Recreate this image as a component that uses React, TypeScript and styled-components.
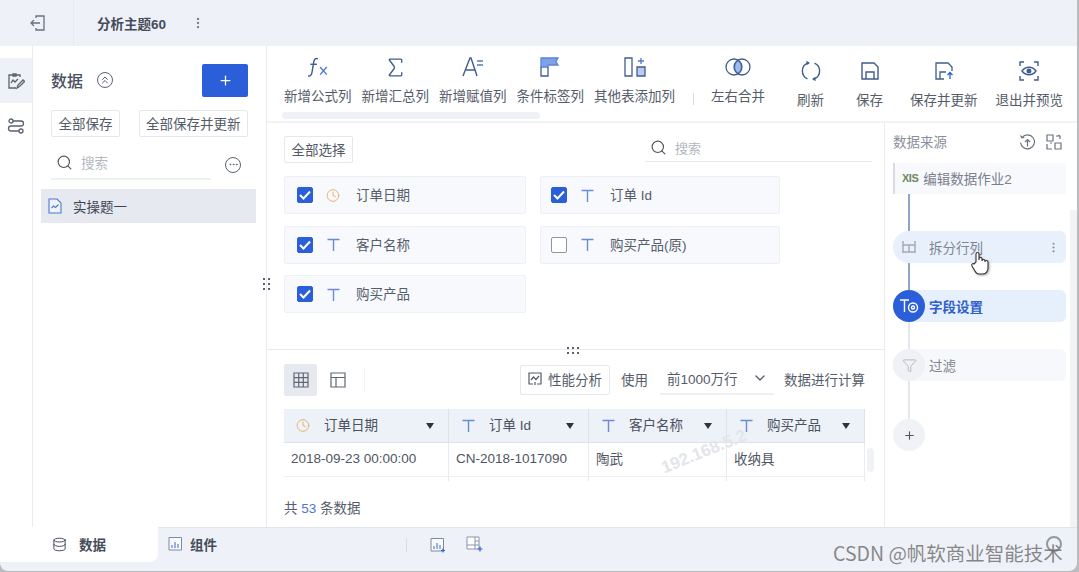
import React from "react";
import styled, {createGlobalStyle} from "styled-components";
import {ChevronDown, ChevronsUp, Clock, Database, EllipsisVertical, Ellipsis, Filter, Plus, Search, Sigma} from "lucide-react";

const GlobalStyle = createGlobalStyle`
    html, body {
        margin: 0;
        padding: 0;
        background: #b9bbbd;
    }
    body {
        font-family: "Liberation Sans", "Noto Sans CJK SC", sans-serif;
        color: #4c5361;
        overflow: hidden;
    }
    * {
        box-sizing: border-box;
    }
`

const Window = styled.div`
    position: relative;
    width: 1077px;
    height: 571px;
    display: flex;
    flex-direction: column;
    background: #eef1f7;
    border-radius: 0 0 8px 8px;
    overflow: hidden;
`

/* top bar */
const TopBar = styled.div`
    height: 46px;
    flex: none;
    display: flex;
    align-items: center;
`
const BackCell = styled.div`
    width: 74px;
    height: 46px;
    display: flex;
    align-items: center;
    padding-left: 29px;
    border-right: 1px solid #e6e9f0;
    color: #6a7180;
`
const TopTitle = styled.div`
    margin-left: 23px;
    padding-bottom: 1px;
    font-size: 13.5px;
    font-weight: 700;
    color: #454c59;
    width: 94px;
`
const MoreDots = styled.div`
    display: flex;
    color: #767d8a;
`

/* main area */
const Main = styled.div`
    flex: 1;
    min-height: 0;
    display: flex;
    background: #fff;
`
const Rail = styled.div`
    width: 33px;
    flex: none;
    padding-top: 12px;
    border-right: 1px solid #e9ebf0;
`
const RailItem = styled.div<{ $active?: boolean }>`
    height: 45px;
    display: flex;
    align-items: center;
    justify-content: center;
    background: ${props => props.$active ? "#eef1f7" : "transparent"};
    color: #5a6270;
`
const DataPanel = styled.div`
    width: 234px;
    flex: none;
    position: relative;
    border-right: 1px solid #e9ebf0;
    padding-top: 18px;
`
const DataHead = styled.div`
    display: flex;
    align-items: center;
    padding: 0 18px;
    height: 32px;
`
const DataTitle = styled.div`
    font-size: 16px;
    font-weight: 500;
    color: #4a5160;
    margin-right: 14px;
`
const RoundIcon = styled.div`
    width: 16px;
    height: 16px;
    border-radius: 50%;
    border: 1.2px solid #5d6472;
    display: flex;
    align-items: center;
    justify-content: center;
    color: #5d6472;
`
const AddButton = styled.div`
    margin-left: auto;
    width: 46px;
    height: 33px;
    border-radius: 2px;
    background: #2b5fd9;
    color: #fff;
    display: flex;
    align-items: center;
    justify-content: center;
`
const SaveRow = styled.div`
    display: flex;
    justify-content: space-between;
    padding: 0 18px;
    margin-top: 14px;
`
const PlainButton = styled.div`
    height: 27px;
    padding: 0 6.5px 2px;
    display: inline-flex;
    align-items: center;
    border: 1px solid #e4e7ed;
    border-radius: 2px;
    font-size: 13.5px;
    color: #535a68;
    background: #fff;
    white-space: nowrap;
`
const SearchRow = styled.div`
    display: flex;
    align-items: center;
    margin: 12px 0 0 18px;
    width: 190px;
`
const SearchField = styled.div`
    width: 160px;
    height: 31px;
    display: flex;
    align-items: center;
    gap: 8px;
    padding: 0 0 3px 5px;
    border-bottom: 2px solid #eef0f4;
    font-size: 13.5px;
    color: #b4b8c0;
    svg {
        color: #4c5361;
    }
`
const MoreCircle = styled(RoundIcon)`
    margin-left: auto;
`
const TreeRow = styled.div`
    margin: 9px 10px 0 8px;
    height: 34px;
    background: #e6e9f0;
    display: flex;
    align-items: center;
    padding-left: 7px;
    gap: 11px;
    font-size: 13.5px;
    color: #3e4552;
`
const Grip = styled.div`
    position: absolute;
    right: -5px;
    top: 232px;
    width: 8px;
    display: grid;
    grid-template-columns: 3px 3px;
    gap: 3px 2px;
    i {
        width: 2px;
        height: 2px;
        background: #5a6270;
    }
`

/* centre column */
const Workspace = styled.div`
    flex: 1;
    min-width: 0;
    display: flex;
    flex-direction: column;
`
const Toolbar = styled.div`
    height: 77px;
    flex: none;
    display: flex;
    border-bottom: 2px solid #f0f2f6;
`
const ToolScroll = styled.div`
    width: 426px;
    flex: none;
    padding-left: 17px;
`
const ToolRow = styled.div`
    display: flex;
    gap: 10px;
    white-space: nowrap;
`
const ScrollThumb = styled.div`
    width: 258px;
    height: 7px;
    margin: 6px 0 0 -2px;
    border-radius: 4px;
    background: #eef1f6;
`
const Tool = styled.div<{ $low?: boolean; $gap?: number }>`
    display: flex;
    flex-direction: column;
    align-items: center;
    flex: none;
    padding-top: ${props => props.$low ? 12 : 8}px;
    margin-left: ${props => props.$gap ?? 0}px;
    font-size: 13.5px;
    line-height: 18px;
    color: #555c6a;
`
const ToolIcon = styled.div`
    height: 26px;
    margin-bottom: 8px;
    display: flex;
    align-items: center;
    justify-content: center;
    color: #3f5d8f;
`
const ToolDivider = styled.div`
    width: 1px;
    height: 12px;
    margin-top: 47px;
    background: #d9dce3;
`
const Body = styled.div`
    flex: 1;
    min-height: 0;
    display: flex;
`
const Center = styled.div`
    width: 618px;
    flex: none;
    display: flex;
    flex-direction: column;
    border-right: 1px solid #e9ebf0;
`
const FieldSection = styled.div`
    height: 227px;
    flex: none;
    position: relative;
    padding: 13px 17px 0;
    border-bottom: 1px solid #e9ebf0;
`
const FieldHead = styled.div`
    display: flex;
    justify-content: space-between;
    align-items: flex-start;
`
const FieldSearch = styled.div`
    width: 227px;
    height: 26px;
    margin-right: -5px;
    display: flex;
    align-items: center;
    gap: 8px;
    padding: 0 0 2px 5px;
    border-bottom: 1px solid #e8eaef;
    font-size: 13px;
    color: #b4b8c0;
    svg {
        color: #4c5361;
    }
`
const FieldGrid = styled.div`
    display: grid;
    grid-template-columns: 242px 240px;
    column-gap: 14px;
    row-gap: 11.5px;
    margin-top: 13px;
`
const FieldCard = styled.div`
    height: 38px;
    display: flex;
    align-items: center;
    padding-left: 12px;
    background: #f7f9fd;
    border: 1px solid #eef0f5;
    border-radius: 2px;
    font-size: 13.5px;
    color: #555c6a;
    &:nth-child(even) {
        padding-left: 10px;
    }
`
const FieldName = styled.span`
    padding-bottom: 2px;
`
const Check = styled.div<{ $on?: boolean }>`
    width: 16px;
    height: 16px;
    flex: none;
    border-radius: 2px;
    display: flex;
    align-items: center;
    justify-content: center;
    background: ${props => props.$on ? "#2b5fd9" : "#fff"};
    border: 1px solid ${props => props.$on ? "#2b5fd9" : "#8f949e"};
`
const TypeSlot = styled.div`
    width: 14px;
    margin: 0 16px 0 13px;
    display: flex;
    justify-content: center;
    flex: none;
`
const SplitDots = styled.div`
    position: absolute;
    left: 300px;
    bottom: -5px;
    display: grid;
    grid-template-columns: repeat(3, 2px);
    gap: 3px 3px;
    i {
        width: 2px;
        height: 2px;
        background: #5a6270;
    }
`
const PreviewSection = styled.div`
    flex: 1;
    min-height: 0;
    padding: 14px 17px 0;
    position: relative;
`
const PreviewBar = styled.div`
    display: flex;
    align-items: center;
    height: 32px;
    font-size: 13.5px;
    color: #555c6a;
`
const ViewToggle = styled.div<{ $active?: boolean }>`
    width: 33px;
    height: 32px;
    margin-right: 4px;
    border-radius: 2px;
    display: flex;
    align-items: center;
    justify-content: center;
    background: ${props => props.$active ? "#e6e9f0" : "transparent"};
    color: #5f6775;
`
const BarDivider = styled.div`
    width: 1px;
    height: 24px;
    margin-left: 6px;
    background: #f1f2f5;
`
const AnalyzeButton = styled(PlainButton)`
    margin-left: auto;
    height: 30px;
    padding: 0 7px 2px 7px;
    gap: 6px;
`
const UseLabel = styled.div`
    margin: 0 12px 2px 11px;
`
const RangeSelect = styled.div`
    width: 114px;
    height: 30px;
    display: flex;
    align-items: center;
    justify-content: space-between;
    padding: 0 6px 2px 7px;
    border-bottom: 2px solid #eef0f4;
`
const CalcLabel = styled.div`
    margin: 0 2px 2px 10px;
`
const TableClip = styled.div`
    margin-top: 13px;
    width: 581px;
    height: 72px;
    overflow: hidden;
`
const DataGrid = styled.div`
    display: grid;
    grid-template-columns: 165px 140px 138px 138px;
    grid-auto-rows: 34px;
    font-size: 13.5px;
    color: #4f5663;
`
const HeadCell = styled.div`
    display: flex;
    align-items: center;
    padding: 0 14px 0 12px;
    background: #edf1f8;
    border-right: 1px solid #dde1e9;
    border-bottom: 1px solid #dde1e9;
`
const HeadSlot = styled.div`
    width: 14px;
    flex: none;
    display: flex;
    justify-content: center;
`
const HeadText = styled.span`
    margin-left: 14px;
    padding-bottom: 3px;
    color: #4a5160;
`
const SortArrow = styled.span`
    margin-left: auto;
    width: 0;
    height: 0;
    border-left: 4px solid transparent;
    border-right: 4px solid transparent;
    border-top: 6px solid #2d3340;
`
const DataCell = styled.div`
    display: flex;
    align-items: center;
    padding: 0 0 3px 7px;
    border-right: 1px solid #e8ebf1;
    border-bottom: 1px solid #eef0f5;
    white-space: nowrap;
`
const GridWatermark = styled.div`
    position: absolute;
    left: 392px;
    top: 92px;
    font-size: 17px;
    font-weight: 700;
    color: #e3e5e9;
    transform: rotate(-22deg);
    pointer-events: none;
`
const GridScroll = styled.div`
    position: absolute;
    left: 600px;
    top: 98px;
    width: 7px;
    height: 24px;
    border-radius: 4px;
    background: #f0f2f5;
`
const TotalLine = styled.div`
    margin-top: 16px;
    font-size: 13.5px;
    color: #555c6a;
    em {
        font-style: normal;
        color: #4a76d6;
    }
`

/* right column */
const FlowPanel = styled.div`
    flex: 1;
    min-width: 0;
    position: relative;
    padding: 6px 11px 0 8px;
`
const FlowHead = styled.div`
    display: flex;
    align-items: center;
    height: 24px;
    font-size: 13.5px;
    color: #8a909b;
    svg {
        color: #6a7180;
    }
`
const FlowHeadIcons = styled.div`
    margin-left: auto;
    margin-right: 4px;
    margin-top: 2px;
    display: flex;
    gap: 10px;
`
const SourceCard = styled.div`
    margin-top: 10px;
    height: 31px;
    display: flex;
    align-items: center;
    gap: 5px;
    padding: 0 0 2px 7px;
    background: #f7f9fd;
    border-left: 2px solid #d9dce2;
    font-size: 13.5px;
    color: #7a808c;
`
const XlsMark = styled.span`
    font-size: 11px;
    font-weight: 700;
    letter-spacing: -0.5px;
    color: #6b8c5a;
`
const Connector = styled.div<{ $h: number; $dark?: boolean }>`
    width: 2px;
    height: ${props => props.$h}px;
    margin-left: 15px;
    background: ${props => props.$dark ? "#8fa7c4" : "#e4e7ec"};
`
const FlowNode = styled.div<{ $bg: string; $bold?: boolean }>`
    height: 32px;
    display: flex;
    align-items: center;
    border-radius: 16px 6px 6px 16px;
    background: ${props => props.$bg};
    font-size: 13.5px;
    font-weight: ${props => props.$bold ? 700 : 400};
    color: ${props => props.$bold ? "#2f5fc9" : "#80868f"};
    span {
        margin-left: 4px;
        padding-bottom: 1px;
    }
`
const NodeIcon = styled.div<{ $bg?: string; $color?: string }>`
    width: 32px;
    height: 32px;
    border-radius: 50%;
    flex: none;
    display: flex;
    align-items: center;
    justify-content: center;
    background: ${props => props.$bg ?? "transparent"};
    color: ${props => props.$color ?? "#a3a9b3"};
`
const NodeMore = styled.div`
    margin-left: auto;
    margin-right: 6px;
    display: flex;
    color: #8a909b;
`
const AddNode = styled(NodeIcon)`
    background: #f0f2f5;
    color: #4c5361;
`
const HandCursor = styled.div`
    position: absolute;
    left: 85px;
    top: 128px;
    filter: drop-shadow(1px 1px 1px rgba(0, 0, 0, .35));
`
const FlowScroll = styled.div`
    position: absolute;
    right: 0;
    top: 87px;
    bottom: 0;
    width: 7px;
    background: #f2f3f5;
`

/* bottom tabs */
const BottomBar = styled.div`
    height: 44px;
    flex: none;
    display: flex;
    border-top: 1px solid #e1e4ea;
    font-size: 13.5px;
    font-weight: 700;
    color: #454c59;
`
const ActiveTab = styled.div`
    width: 158px;
    height: 35px;
    margin-top: -1px;
    padding: 0 0 1px 52px;
    display: flex;
    align-items: center;
    gap: 12px;
    background: #fff;
    border-radius: 0 0 8px 0;
`
const OtherTab = styled.div`
    display: flex;
    align-items: center;
    height: 31px;
    gap: 6px;
    margin-left: 10px;
`
const BarSep = styled.div`
    width: 1px;
    height: 14px;
    margin: 10px 23px 0 189px;
    background: #d9dce3;
`
const AddChart = styled.div`
    height: 33px;
    margin-right: 20px;
    display: flex;
    align-items: center;
`
const CornerCircle = styled.div`
    position: absolute;
    left: 1046px;
    top: 536px;
    width: 16px;
    height: 16px;
    border: 2px solid #8f98a6;
    border-radius: 50%;
`
const CsdnMark = styled.div`
    position: absolute;
    left: 833px;
    top: 539px;
    font-family: "Noto Sans CJK SC", sans-serif;
    font-size: 19.5px;
    line-height: 28px;
    white-space: nowrap;
    color: rgba(105, 105, 105, .78);
    pointer-events: none;
`

const Ink = "#3f5d8f"

const BackIcon = () => (
    <svg width="18" height="18" viewBox="0 0 18 18" fill="none" stroke="currentColor" strokeWidth="1.3">
        <path d="M7 4V2h8v14H7v-2"/>
        <path d="M11 9H2M5 6 2 9l3 3"/>
    </svg>
)
const ReportIcon = () => (
    <svg width="18" height="18" viewBox="0 0 18 18" fill="none" stroke="currentColor" strokeWidth="1.3">
        <path d="M13 5V3H2v13h7"/>
        <path d="M6 2h3v2H6zM4 11l2-3 2 2 3-3"/>
        <path d="m10 16 1-3 5-5 1.500 1.500-5 5z"/>
    </svg>
)
const FlowIcon = () => (
    <svg width="18" height="18" viewBox="0 0 18 18" fill="none" stroke="currentColor" strokeWidth="1.3">
        <circle cx="4" cy="4" r="2"/>
        <circle cx="14" cy="14" r="2"/>
        <path d="M6 4h8a2.500 2.500 0 0 1 0 5H4a2.500 2.500 0 0 0 0 5h8"/>
    </svg>
)
const ChartDocIcon = () => (
    <svg width="14" height="16" viewBox="0 0 14 16" fill="#eef3fc" stroke="#4f78cf" strokeWidth="1.100">
        <path d="M1 1h8l4 4v10H1z"/>
        <path d="m3.500 10 2-2 2 1.500 3-3" fill="none"/>
    </svg>
)
const FxIcon = () => (
    <svg width="24" height="24" viewBox="0 0 22 22" fill="none" stroke={Ink} strokeWidth="1.300">
        <path d="M11 3.500C8.500 2.500 7.500 4 7 7L5.500 16C5 19 3.500 19.500 2 19"/>
        <path d="M4 8.500h6"/>
        <path d="m13 11 6 7M19 11l-6 7" stroke="#4f78cf"/>
    </svg>
)
const AssignIcon = () => (
    <svg width="22" height="22" viewBox="0 0 22 22" fill="none" stroke={Ink} strokeWidth="1.400">
        <path d="M1 20 8 2h1l6 18M4 14h9"/>
        <path d="M15 5h6M15 9h6" stroke="#4f78cf"/>
    </svg>
)
const FlagIcon = () => (
    <svg width="20" height="20" viewBox="0 0 20 20" stroke={Ink} strokeWidth="1.300">
        <path d="M1 1h17l-2 3.500L18 8H8v2H1z" fill="#7ea2e6" stroke="#5b83d8"/>
        <path d="M1 10v9h7v-9" fill="none"/>
    </svg>
)
const TableAddIcon = () => (
    <svg width="22" height="20" viewBox="0 0 22 20" fill="none" stroke={Ink} strokeWidth="1.300">
        <path d="M1 1h7v18H1z"/>
        <path d="M13 10h8v9h-8z" fill="#b9cdf2"/>
        <path d="M17 1v6M14 4h6" stroke="#4f78cf"/>
    </svg>
)
const MergeIcon = () => (
    <svg width="26" height="20" viewBox="0 0 26 20" fill="none" stroke={Ink} strokeWidth="1.300">
        <path d="M13 3.500a8 8 0 0 1 0 13 8 8 0 0 1 0-13z" fill="#9dbcf0" stroke="#5b83d8"/>
        <circle cx="9" cy="10" r="8"/>
        <circle cx="17" cy="10" r="8"/>
    </svg>
)
const RefreshIcon = () => (
    <svg width="22" height="22" viewBox="0 0 22 22" fill="none" stroke={Ink} strokeWidth="1.400">
        <path d="M7.500 3.200A8.500 8.500 0 0 0 7.500 18.800"/>
        <path d="M14.500 3.200A8.500 8.500 0 0 1 14.500 18.800"/>
        <path d="M10 3 6.500.8v4.400zM12 19l3.500-2.200v4.400z" fill={Ink} stroke="none"/>
    </svg>
)
const SaveIcon = () => (
    <svg width="20" height="20" viewBox="0 0 20 20" fill="none" stroke={Ink} strokeWidth="1.400">
        <path d="M2 2h12l4 4v12H2z"/>
        <path d="M6 18v-7h8v7"/>
    </svg>
)
const SaveUpIcon = () => (
    <svg width="20" height="20" viewBox="0 0 20 20" fill="none" stroke={Ink} strokeWidth="1.300">
        <path d="M10 18H2V2h12l4 4v4"/>
        <path d="M6 18v-7h6"/>
        <path d="M16 18v-6M13.500 14l2.500-2.500 2.500 2.500" stroke="#2b5fd9"/>
    </svg>
)
const ExitViewIcon = () => (
    <svg width="20" height="20" viewBox="0 0 20 20" fill="none" stroke={Ink} strokeWidth="1.400">
        <path d="M1 5V1h4M15 1h4v4M19 15v4h-4M5 19H1v-4"/>
        <path d="M3 10c3.500-5 10.500-5 14 0-3.500 5-10.500 5-14 0z"/>
        <circle cx="10" cy="10" r="1.800" fill={Ink}/>
    </svg>
)
const Tick = () => (
    <svg width="12" height="10" viewBox="0 0 12 10" fill="none" stroke="#fff" strokeWidth="2">
        <path d="m1 5 3.500 3.500L11 1.500"/>
    </svg>
)
const TypeIcon = () => (
    <svg width="13" height="13" viewBox="0 0 13 13" fill="none" stroke="#6b8ad6" strokeWidth="1.400">
        <path d="M.5 1.500h12M6.500 1.500V13"/>
    </svg>
)
const GridIcon = () => (
    <svg width="16" height="16" viewBox="0 0 16 16" fill="none" stroke="currentColor" strokeWidth="1.200">
        <path d="M1 1h14v14H1zM1 5.700h14M1 10.300h14M5.700 1v14M10.300 1v14"/>
    </svg>
)
const PivotIcon = () => (
    <svg width="16" height="16" viewBox="0 0 16 16" fill="none" stroke="currentColor" strokeWidth="1.200">
        <path d="M1 1h14v14H1zM1 5.500h14M6 5.500V15"/>
    </svg>
)
const AnalyzeIcon = () => (
    <svg width="14" height="14" viewBox="0 0 14 14" fill="none" stroke="currentColor" strokeWidth="1.200">
        <path d="M5 12H1V1h12v11H9"/>
        <path d="m3 8 2.500-3L8 7.500 11 4M7 10v3"/>
    </svg>
)
const HistoryIcon = () => (
    <svg width="17" height="17" viewBox="0 0 17 17" fill="none" stroke="currentColor" strokeWidth="1.200">
        <path d="M3 3.500A7 7 0 1 1 1.500 8.500"/>
        <path d="M1.500 1.500 3 3.700l2.300-.6M8.500 12.500v-7M6 8l2.500-2.500L11 8"/>
    </svg>
)
const SwapIcon = () => (
    <svg width="16" height="16" viewBox="0 0 16 16" fill="none" stroke="currentColor" strokeWidth="1.200">
        <path d="M1 1h6v6H1zM9 9h6v6H9zM10 2h4v3M1 10v5h5M12.500 1 14 2.500M4 9h2"/>
    </svg>
)
const SplitIcon = () => (
    <svg width="14" height="14" viewBox="0 0 14 14" fill="none" stroke="currentColor" strokeWidth="1.400">
        <path d="M1 1v12M13 1v12M1 5h12M1 12h12M7 5v7"/>
    </svg>
)
const FieldSetIcon = () => (
    <svg width="20" height="16" viewBox="0 0 20 16" fill="none" stroke="#fff" strokeWidth="1.400">
        <path d="M1 2h9M5.500 2v12"/>
        <circle cx="14" cy="9.500" r="4.500"/>
        <circle cx="14" cy="9.500" r="1.500"/>
    </svg>
)
const HandIcon = () => (
    <svg width="20" height="24" viewBox="0 0 20 24" fill="#fff" stroke="#333" strokeWidth="1.100">
        <path d="M6 11V3a1.500 1.500 0 0 1 3 0v6-1a1.500 1.500 0 0 1 3 0v2a1.500 1.500 0 0 1 3 0v1a1.500 1.500 0 0 1 3 0v6c0 3-2 6-5 6H9c-2 0-3-1-4-3l-3-5c-1-2 1-3 2-2z"/>
    </svg>
)
const MiniChartIcon = ({add}: { add?: boolean }) => (
    <svg width="16" height="16" viewBox="0 0 16 16" fill="#fff" stroke="#7f8aa0" strokeWidth="1">
        <path d="M1 1.500h12.500v12.500H1z" fill="#f7f9fd"/>
        <path d="M4 12V9M7 12V6M10 12V8" stroke="#5b83d8" strokeWidth="1.200"/>
        {add && <path d="M13 11.500v4M11 13.500h4" stroke="#2b5fd9" strokeWidth="1.200"/>}
    </svg>
)
const MiniTableIcon = () => (
    <svg width="18" height="17" viewBox="0 0 18 17" fill="#fff" stroke="#8b95aa" strokeWidth="1">
        <path d="M1 1h12v12H1z"/>
        <path d="M9 1v12M9 5h4M9 9h4M1 9h8" fill="none"/>
        <path d="M14 10.500v5M11.500 13h5" stroke="#2b5fd9" strokeWidth="1.200"/>
    </svg>
)

const OrderClock = () => <Clock size={15} color="#e8ae62" strokeWidth={1.6}/>

const leftTools = [
    {label: "新增公式列", icon: <FxIcon/>},
    {label: "新增汇总列", icon: <Sigma size={25} strokeWidth={1.3}/>},
    {label: "新增赋值列", icon: <AssignIcon/>},
    {label: "条件标签列", icon: <FlagIcon/>},
    {label: "其他表添加列", icon: <TableAddIcon/>},
]

const rightTools = [
    {label: "刷新", icon: <RefreshIcon/>, gap: 32},
    {label: "保存", icon: <SaveIcon/>, gap: 32},
    {label: "保存并更新", icon: <SaveUpIcon/>, gap: 27},
    {label: "退出并预览", icon: <ExitViewIcon/>, gap: 18},
]

const fields = [
    {name: "订单日期", on: true, clock: true},
    {name: "订单 Id", on: true},
    {name: "客户名称", on: true},
    {name: "购买产品(原)", on: false},
    {name: "购买产品", on: true},
]

const columns = [
    {name: "订单日期", clock: true},
    {name: "订单 Id"},
    {name: "客户名称"},
    {name: "购买产品"},
]

const App = () => {
    return (
        <Window>
            <GlobalStyle/>
            <TopBar>
                <BackCell><BackIcon/></BackCell>
                <TopTitle>分析主题60</TopTitle>
                <MoreDots><EllipsisVertical size={14}/></MoreDots>
            </TopBar>
            <Main>
                <Rail>
                    <RailItem $active><ReportIcon/></RailItem>
                    <RailItem><FlowIcon/></RailItem>
                </Rail>
                <DataPanel>
                    <DataHead>
                        <DataTitle>数据</DataTitle>
                        <RoundIcon><ChevronsUp size={12}/></RoundIcon>
                        <AddButton><Plus size={15} strokeWidth={2}/></AddButton>
                    </DataHead>
                    <SaveRow>
                        <PlainButton>全部保存</PlainButton>
                        <PlainButton>全部保存并更新</PlainButton>
                    </SaveRow>
                    <SearchRow>
                        <SearchField><Search size={17} strokeWidth={1.6}/>搜索</SearchField>
                        <MoreCircle><Ellipsis size={11}/></MoreCircle>
                    </SearchRow>
                    <TreeRow><ChartDocIcon/>实操题一</TreeRow>
                    <Grip><i/><i/><i/><i/><i/><i/></Grip>
                </DataPanel>
                <Workspace>
                    <Toolbar>
                        <ToolScroll>
                            <ToolRow>
                                {leftTools.map(tool => (
                                    <Tool key={tool.label}>
                                        <ToolIcon>{tool.icon}</ToolIcon>
                                        {tool.label}
                                    </Tool>
                                ))}
                            </ToolRow>
                            <ScrollThumb/>
                        </ToolScroll>
                        <ToolDivider/>
                        <Tool $gap={17}>
                            <ToolIcon><MergeIcon/></ToolIcon>
                            左右合并
                        </Tool>
                        {rightTools.map(tool => (
                            <Tool key={tool.label} $low $gap={tool.gap}>
                                <ToolIcon>{tool.icon}</ToolIcon>
                                {tool.label}
                            </Tool>
                        ))}
                    </Toolbar>
                    <Body>
                        <Center>
                            <FieldSection>
                                <FieldHead>
                                    <PlainButton>全部选择</PlainButton>
                                    <FieldSearch><Search size={17} strokeWidth={1.6}/>搜索</FieldSearch>
                                </FieldHead>
                                <FieldGrid>
                                    {fields.map(field => (
                                        <FieldCard key={field.name}>
                                            <Check $on={field.on}>{field.on && <Tick/>}</Check>
                                            <TypeSlot>{field.clock ? <OrderClock/> : <TypeIcon/>}</TypeSlot>
                                            <FieldName>{field.name}</FieldName>
                                        </FieldCard>
                                    ))}
                                </FieldGrid>
                                <SplitDots><i/><i/><i/><i/><i/><i/></SplitDots>
                            </FieldSection>
                            <PreviewSection>
                                <PreviewBar>
                                    <ViewToggle $active><GridIcon/></ViewToggle>
                                    <ViewToggle><PivotIcon/></ViewToggle>
                                    <BarDivider/>
                                    <AnalyzeButton><AnalyzeIcon/>性能分析</AnalyzeButton>
                                    <UseLabel>使用</UseLabel>
                                    <RangeSelect>前1000万行<ChevronDown size={16}/></RangeSelect>
                                    <CalcLabel>数据进行计算</CalcLabel>
                                </PreviewBar>
                                <TableClip>
                                    <DataGrid>
                                        {columns.map(col => (
                                            <HeadCell key={col.name}>
                                                <HeadSlot>{col.clock ? <OrderClock/> : <TypeIcon/>}</HeadSlot>
                                                <HeadText>{col.name}</HeadText>
                                                <SortArrow/>
                                            </HeadCell>
                                        ))}
                                        <DataCell>2018-09-23 00:00:00</DataCell>
                                        <DataCell>CN-2018-1017090</DataCell>
                                        <DataCell>陶武</DataCell>
                                        <DataCell>收纳具</DataCell>
                                        <DataCell/>
                                        <DataCell/>
                                        <DataCell/>
                                        <DataCell/>
                                    </DataGrid>
                                </TableClip>
                                <GridWatermark>192.168.5.2</GridWatermark>
                                <GridScroll/>
                                <TotalLine>共 <em>53</em> 条数据</TotalLine>
                            </PreviewSection>
                        </Center>
                        <FlowPanel>
                            <FlowHead>
                                数据来源
                                <FlowHeadIcons><HistoryIcon/><SwapIcon/></FlowHeadIcons>
                            </FlowHead>
                            <SourceCard><XlsMark>XIS</XlsMark>编辑数据作业2</SourceCard>
                            <Connector $h={37} $dark/>
                            <FlowNode $bg="#e8f0fc">
                                <NodeIcon><SplitIcon/></NodeIcon>
                                <span>拆分行列</span>
                                <NodeMore><EllipsisVertical size={13}/></NodeMore>
                            </FlowNode>
                            <Connector $h={27} $dark/>
                            <FlowNode $bg="#e6effc" $bold>
                                <NodeIcon $bg="#2b5fd9" $color="#fff"><FieldSetIcon/></NodeIcon>
                                <span>字段设置</span>
                            </FlowNode>
                            <Connector $h={27}/>
                            <FlowNode $bg="#f6f8fc">
                                <NodeIcon $bg="#eff1f4"><Filter size={15} strokeWidth={1.2}/></NodeIcon>
                                <span>过滤</span>
                            </FlowNode>
                            <Connector $h={38}/>
                            <AddNode><Plus size={13}/></AddNode>
                            <HandCursor><HandIcon/></HandCursor>
                            <FlowScroll/>
                        </FlowPanel>
                    </Body>
                </Workspace>
            </Main>
            <BottomBar>
                <ActiveTab><Database size={15} strokeWidth={1.6}/>数据</ActiveTab>
                <OtherTab><MiniChartIcon/>组件</OtherTab>
                <BarSep/>
                <AddChart><MiniChartIcon add/></AddChart>
                <AddChart><MiniTableIcon/></AddChart>
            </BottomBar>
            <CornerCircle/>
            <CsdnMark>CSDN @帆软商业智能技术</CsdnMark>
        </Window>
    );
}

export default App;
